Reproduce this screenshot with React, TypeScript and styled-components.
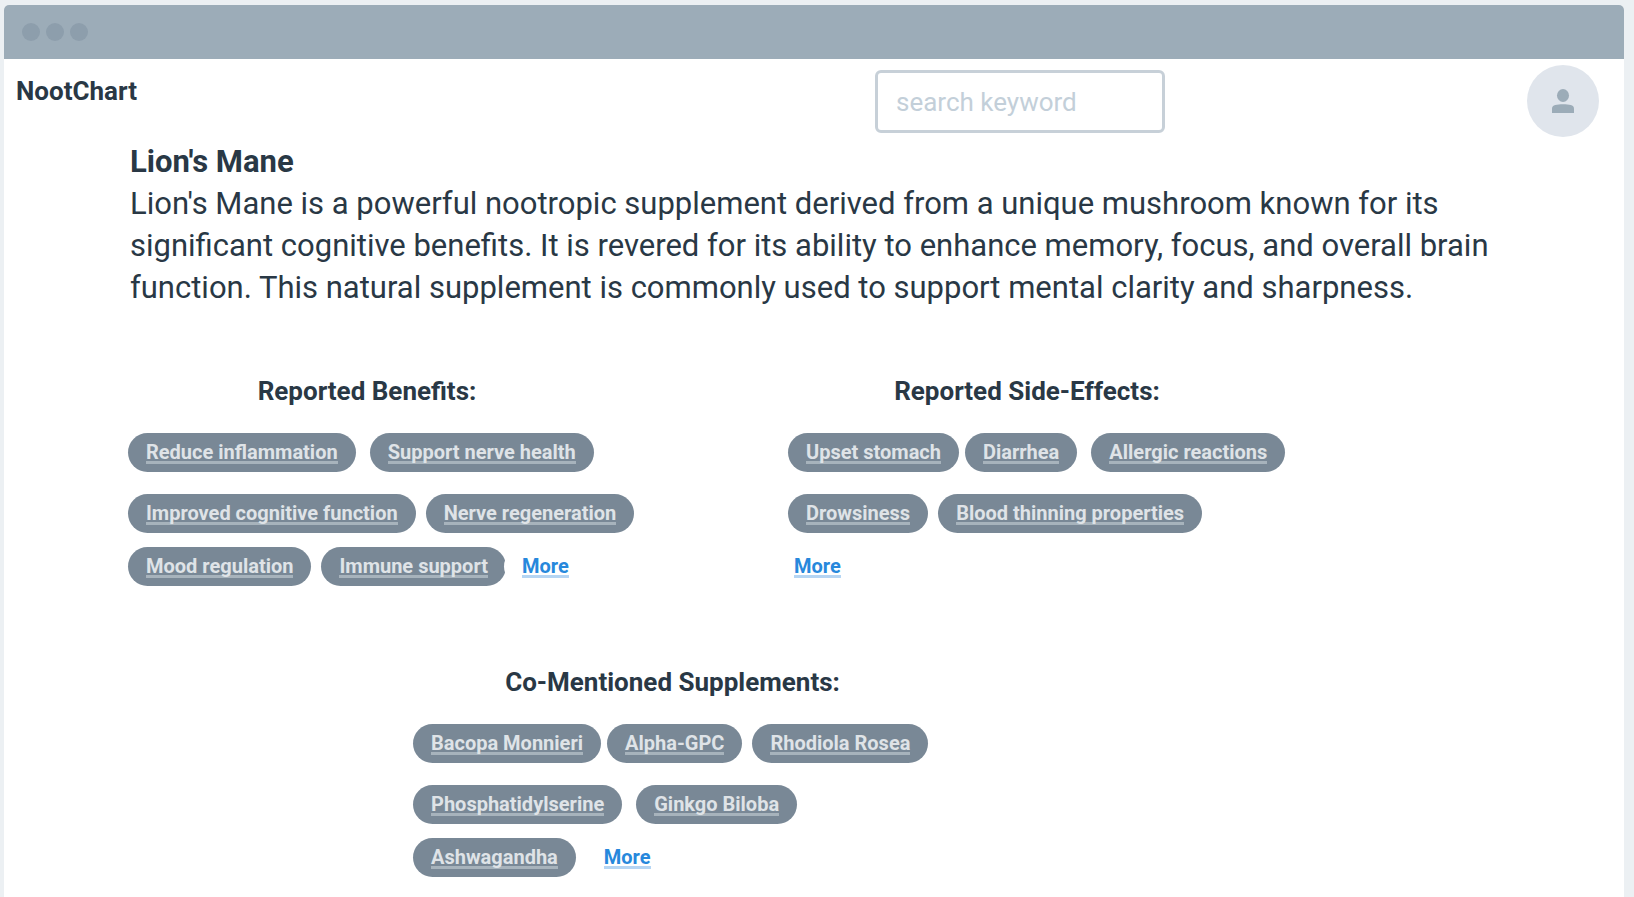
import React from "react";
import styled, { createGlobalStyle } from "styled-components";

const GlobalStyle = createGlobalStyle`
  *, *::before, *::after { box-sizing: border-box; }
  body {
    margin: 0;
    background: #ecf0f3;
    color: #293845;
    font-family: Roboto, "Liberation Sans", sans-serif;
  }
  h1, h2, p { margin: 0; }
`;

const Frame = styled.div`
  min-height: 100vh;
  padding: 5px 10px 0 4px;
  display: flex;
`;

const BrowserWindow = styled.div`
  flex: 1;
  min-width: 0;
  background: #fff;
  border-radius: 5px 5px 0 0;
  overflow: hidden;
`;

const TitleBar = styled.div`
  height: 54px;
  padding: 0 18px;
  display: flex;
  align-items: center;
  gap: 6px;
  background: #9cacb8;
`;

const Dot = styled.span`
  width: 18px;
  height: 18px;
  border-radius: 50%;
  background: #8d9eac;
`;

const Header = styled.header`
  display: grid;
  grid-template-columns: 871fr 290px 459fr;
  align-items: start;
  padding-top: 6px;
`;

const Brand = styled.a`
  justify-self: start;
  padding: 11px 12px;
  color: inherit;
  font-size: 26px;
  font-weight: 700;
  line-height: 30px;
  text-decoration: none;
`;

const Search = styled.input`
  width: 100%;
  height: 63px;
  margin-top: 5px;
  padding: 0 18px;
  border: 3px solid #c7d0d8;
  border-radius: 6px;
  background: #fff;
  color: #293845;
  font-family: inherit;
  font-size: 26px;
  &::placeholder {
    color: #c3cfd9;
    opacity: 1;
  }
`;

const Avatar = styled.button`
  justify-self: end;
  width: 72px;
  height: 72px;
  margin-right: 25px;
  padding: 0;
  display: grid;
  place-items: center;
  border: 0;
  border-radius: 50%;
  background: #e0e5ec;
`;

const Main = styled.main`
  padding: 4px 124px 20px;
`;

const Intro = styled.section`
  padding: 0 2px;
  font-size: 31px;
  line-height: 42px;
`;

const Title = styled.h1`
  font-size: 31px;
  font-weight: 700;
  line-height: 42px;
`;

const Columns = styled.div`
  display: grid;
  grid-template-columns: 660fr 712fr;
  margin-top: 66px;
`;

const Centered = styled.div`
  margin: 80px 0 0 285px;
`;

const Heading = styled.h2<{ $span: number }>`
  max-width: ${(p) => p.$span}px;
  margin-bottom: 26px;
  font-size: 26px;
  font-weight: 700;
  line-height: 32px;
  text-align: center;
  white-space: nowrap;
`;

const Row = styled.div<{ $before?: number }>`
  display: flex;
  margin-top: ${(p) => p.$before ?? 0}px;
`;

const Pill = styled.a<{ $gap?: number }>`
  height: 39px;
  margin-left: ${(p) => p.$gap ?? 0}px;
  padding: 8px 18px;
  border-radius: 20px;
  background: #798896;
  color: #dfe3e7;
  font-size: 20px;
  font-weight: 700;
  line-height: 22px;
  text-decoration: none;
  white-space: nowrap;
`;

const MorePill = styled(Pill)`
  background: #fff;
  color: #2788dc;
`;

const Label = styled.span<{ $line: string }>`
  display: block;
  height: 23px;
  border-bottom: 3px solid ${(p) => p.$line};
`;

type Tag = { text: string; gap?: number; more?: boolean };
type TagRow = { before?: number; tags: Tag[] };

const benefits: TagRow[] = [
  { tags: [{ text: "Reduce inflammation" }, { text: "Support nerve health", gap: 14 }] },
  { before: 22, tags: [{ text: "Improved cognitive function" }, { text: "Nerve regeneration", gap: 10 }] },
  {
    before: 14,
    tags: [{ text: "Mood regulation" }, { text: "Immune support", gap: 10 }, { text: "More", gap: -2, more: true }],
  },
];

const sideEffects: TagRow[] = [
  { tags: [{ text: "Upset stomach" }, { text: "Diarrhea", gap: 6 }, { text: "Allergic reactions", gap: 14 }] },
  { before: 22, tags: [{ text: "Drowsiness" }, { text: "Blood thinning properties", gap: 10 }] },
  { before: 14, tags: [{ text: "More", gap: -12, more: true }] },
];

const supplements: TagRow[] = [
  { tags: [{ text: "Bacopa Monnieri" }, { text: "Alpha-GPC", gap: 6 }, { text: "Rhodiola Rosea", gap: 10 }] },
  { before: 22, tags: [{ text: "Phosphatidylserine" }, { text: "Ginkgo Biloba", gap: 14 }] },
  { before: 14, tags: [{ text: "Ashwagandha" }, { text: "More", gap: 10, more: true }] },
];

function TagGroup({ title, span, rows }: { title: string; span: number; rows: TagRow[] }) {
  return (
    <section>
      <Heading $span={span}>{title}</Heading>
      {rows.map((row, i) => (
        <Row key={i} $before={row.before}>
          {row.tags.map((tag) =>
            tag.more ? (
              <MorePill key={tag.text} href="#more" $gap={tag.gap}>
                <Label $line="#b5d5f3">{tag.text}</Label>
              </MorePill>
            ) : (
              <Pill key={tag.text} href="#tag" $gap={tag.gap}>
                <Label $line="#a7b3bc">{tag.text}</Label>
              </Pill>
            ),
          )}
        </Row>
      ))}
    </section>
  );
}

export default function App() {
  return (
    <>
      <GlobalStyle />
      <Frame>
        <BrowserWindow>
          <TitleBar>
            <Dot />
            <Dot />
            <Dot />
          </TitleBar>
          <Header>
            <Brand href="#home">NootChart</Brand>
            <Search type="search" placeholder="search keyword" aria-label="Search keyword" />
            <Avatar type="button" aria-label="Account">
              <svg width="22" height="24" viewBox="0 0 22 24" fill="#9cacb8" aria-hidden="true">
                <ellipse cx="11" cy="6.5" rx="6" ry="6.5" />
                <path d="M0 24V19.5C0 16 5 15.3 11 15.3S22 16 22 19.5V24Z" />
              </svg>
            </Avatar>
          </Header>
          <Main>
            <Intro>
              <Title>Lion's Mane</Title>
              <p>
                Lion's Mane is a powerful nootropic supplement derived from a unique mushroom known for its
                significant cognitive benefits. It is revered for its ability to enhance memory, focus, and overall
                brain function. This natural supplement is commonly used to support mental clarity and sharpness.
              </p>
            </Intro>
            <Columns>
              <TagGroup title="Reported Benefits:" span={478} rows={benefits} />
              <TagGroup title="Reported Side-Effects:" span={478} rows={sideEffects} />
            </Columns>
            <Centered>
              <TagGroup title="Co-Mentioned Supplements:" span={519} rows={supplements} />
            </Centered>
          </Main>
        </BrowserWindow>
      </Frame>
    </>
  );
}
